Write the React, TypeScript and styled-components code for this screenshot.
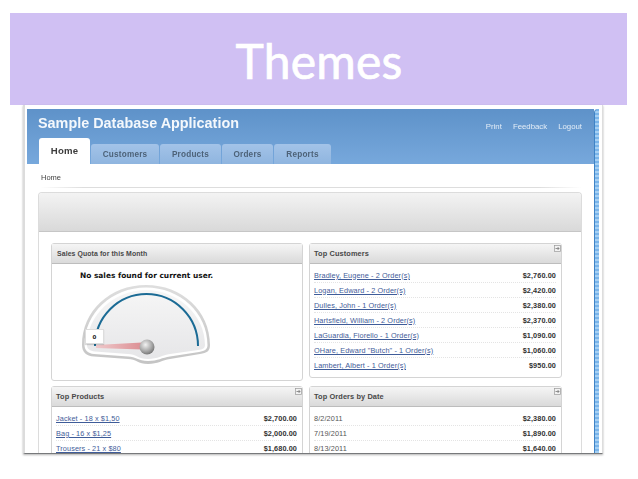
import styled, { createGlobalStyle } from "styled-components";

const GlobalStyle = createGlobalStyle`
  html, body {
    margin: 0;
    padding: 0;
    background: #ffffff;
    overflow: hidden;
  }
  body {
    font-family: "Liberation Sans", Arial, sans-serif;
  }
`;

const Slide = styled.div`
  width: 638px;
  height: 479px;
  padding-top: 13px;
  box-sizing: border-box;
`;

const Banner = styled.div`
  margin-left: 10px;
  width: 617px;
  height: 92px;
  background: #d0c0f3;
  display: flex;
  align-items: center;
  justify-content: center;
`;

const Title = styled.h1`
  margin: 3px 0 0 1px;
  color: #ffffff;
  font-family: Lato, "Open Sans", sans-serif;
  font-weight: 400;
  font-size: 48px;
  line-height: 60px;
  letter-spacing: 0.2px;
  -webkit-text-stroke: 0.7px #ffffff;
`;

const Shot = styled.div`
  margin-left: 23px;
  width: 580px;
  height: 349px;
  box-sizing: border-box;
  padding: 4px 3px 0 2px;
  display: flex;
  overflow: hidden;
  background: #ffffff;
  border-left: 2px solid #dcdcdc;
  border-right: 1px solid #dddddd;
  border-bottom: 1px solid #77797b;
  box-shadow: 0 1px 2px rgba(0, 0, 0, 0.3);
  filter: blur(0.35px);
`;

const AppWindow = styled.div`
  width: 567px;
  flex: none;
`;

const Scrollbar = styled.div`
  width: 5px;
  flex: none;
  border-top-left-radius: 4px;
  background: repeating-linear-gradient(180deg, #79b4ea 0 2px, #a5d0f3 2px 4px);
  border-left: 1px solid #3f83c5;
  box-sizing: border-box;
`;

const Header = styled.div`
  height: 55px;
  box-sizing: border-box;
  padding: 0 12px 0 11px;
  background: linear-gradient(180deg, #5e92c9, #77a8dc);
  display: flex;
  flex-direction: column;
  justify-content: space-between;
`;

const TopRow = styled.div`
  display: flex;
  justify-content: space-between;
  align-items: center;
  padding-top: 5px;
`;

const AppName = styled.div`
  color: #f4f8fc;
  font-weight: 700;
  font-size: 14.4px;
  line-height: 18px;
`;

const TopLinks = styled.div`
  display: flex;
  gap: 11px;
  color: #e3edf7;
  font-size: 7.8px;
  margin-top: 7px;
`;

const Tabs = styled.div`
  display: flex;
  align-items: flex-end;
  gap: 1px;
  padding-left: 1px;
`;

const Tab = styled.div<{ $active?: boolean; $width: number }>`
  width: ${(p) => p.$width}px;
  height: ${(p) => (p.$active ? 26 : 20)}px;
  border-radius: 3px 3px 0 0;
  background: ${(p) => (p.$active ? "#ffffff" : "linear-gradient(180deg, #a3c3e8, #8fb5df)")};
  color: ${(p) => (p.$active ? "#3c3c3c" : "#4d6278")};
  font-weight: 700;
  font-size: ${(p) => (p.$active ? 9.6 : 8.2)}px;
  letter-spacing: 0.2px;
  display: flex;
  align-items: center;
  justify-content: center;
  padding-bottom: ${(p) => (p.$active ? 2 : 0)}px;
  box-sizing: border-box;
`;

const Breadcrumb = styled.div`
  height: 24px;
  box-sizing: border-box;
  margin: 0 13px 0 14px;
  padding-top: 9px;
  font-size: 7.5px;
  line-height: 10px;
  color: #444444;
  border-bottom: 1px solid;
  border-image: linear-gradient(90deg, #ffffff, #dddddd 8%, #dddddd 92%, #ffffff) 1;
`;

const Region = styled.div`
  margin: 4px 12px 0 11px;
  border: 1px solid #dcdcdc;
  border-bottom: 0;
  border-radius: 4px 4px 0 0;
`;

const Hero = styled.div`
  height: 39px;
  border-radius: 3px 3px 0 0;
  background: linear-gradient(180deg, #f3f3f3, #d9d9d9);
  border-bottom: 1px solid #c6c6c6;
  box-sizing: border-box;
`;

const Dashboard = styled.div`
  display: grid;
  grid-template-columns: 252px 253px;
  grid-template-rows: 138px auto;
  column-gap: 6px;
  row-gap: 5px;
  padding: 11px 0 0 12px;
`;

const Panel = styled.div`
  position: relative;
  box-sizing: border-box;
  border: 1px solid #d4d4d4;
  border-radius: 3px;
  background: #ffffff;
  align-self: start;
`;

const PanelHeader = styled.div<{ $small?: boolean }>`
  height: 20px;
  box-sizing: border-box;
  padding-left: ${(p) => (p.$small ? 5 : 4)}px;
  display: flex;
  align-items: center;
  background: linear-gradient(180deg, #f5f5f5, #dadada);
  border-bottom: 1px solid #bdbdbd;
  color: #484848;
  font-weight: 700;
  font-size: ${(p) => (p.$small ? 6.9 : 7.4)}px;
  letter-spacing: 0.1px;
`;

const Expand = styled.svg`
  position: absolute;
  top: 1px;
  right: 0;
  width: 7px;
  height: 7px;
`;

const QuotaBody = styled.div`
  height: 116px;
  padding: 6px 0 0 28px;
  box-sizing: border-box;
`;

const NoSales = styled.div`
  font-family: "DejaVu Sans", Verdana, sans-serif;
  font-weight: 700;
  font-size: 7.45px;
  line-height: 12px;
  color: #111111;
`;

const Gauge = styled.div`
  position: relative;
  width: 140px;
  height: 85px;
  margin: 1px 0 0 -2px;
`;

const GaugeBadge = styled.div`
  position: absolute;
  left: 7px;
  top: 46px;
  width: 19px;
  height: 15px;
  background: #ffffff;
  border: 1px solid #dddddd;
  box-sizing: border-box;
  box-shadow: 0 1px 1px rgba(0, 0, 0, 0.15);
  font-family: "DejaVu Sans", sans-serif;
  font-weight: 700;
  font-size: 5.5px;
  color: #222222;
  display: flex;
  align-items: center;
  justify-content: center;
`;

const List = styled.div`
  padding: 4px 5px 4px 4px;
`;

const Row = styled.div`
  height: 15px;
  box-sizing: border-box;
  display: flex;
  align-items: center;
  justify-content: space-between;
  border-bottom: 1px dotted #e4e4e4;
  font-size: 7.3px;
  letter-spacing: 0.1px;

  &:last-child {
    border-bottom: 0;
  }
`;

const RowLink = styled.span`
  color: #3f5c99;
  text-decoration: underline;
`;

const RowDate = styled.span`
  color: #555555;
`;

const Amount = styled.span`
  color: #333333;
  font-weight: 700;
`;

const customers = [
  ["Bradley, Eugene - 2 Order(s)", "$2,760.00"],
  ["Logan, Edward - 2 Order(s)", "$2,420.00"],
  ["Dulles, John - 1 Order(s)", "$2,380.00"],
  ["Hartsfield, William - 2 Order(s)", "$2,370.00"],
  ["LaGuardia, Fiorello - 1 Order(s)", "$1,090.00"],
  ['OHare, Edward "Butch" - 1 Order(s)', "$1,060.00"],
  ["Lambert, Albert - 1 Order(s)", "$950.00"],
];

const products = [
  ["Jacket - 18 x $1,50", "$2,700.00"],
  ["Bag - 16 x $1,25", "$2,000.00"],
  ["Trousers - 21 x $80", "$1,680.00"],
];

const orders = [
  ["8/2/2011", "$2,380.00"],
  ["7/19/2011", "$1,890.00"],
  ["8/13/2011", "$1,640.00"],
];

function ExpandIcon() {
  return (
    <Expand viewBox="0 0 7 7">
      <rect x="0.5" y="0.5" width="6" height="6" fill="#f2f2f2" stroke="#9a9a9a" strokeWidth="0.7" />
      <path d="M1.5 3.5H5M3.6 2L5 3.5 3.6 5" fill="none" stroke="#666666" strokeWidth="0.7" />
    </Expand>
  );
}

function GaugeDial() {
  return (
    <Gauge>
      <svg width="140" height="85" viewBox="0 0 140 85">
        <defs>
          <linearGradient id="rim" x1="0" y1="0" x2="0" y2="1">
            <stop offset="0" stopColor="#dedede" />
            <stop offset="1" stopColor="#c4c4c4" />
          </linearGradient>
          <linearGradient id="face" x1="0" y1="0" x2="0" y2="1">
            <stop offset="0" stopColor="#f6f6f6" />
            <stop offset="1" stopColor="#e6e6e8" />
          </linearGradient>
          <radialGradient id="knob" cx="0.4" cy="0.35" r="0.7">
            <stop offset="0" stopColor="#f2f2f2" />
            <stop offset="0.6" stopColor="#a8a8a8" />
            <stop offset="1" stopColor="#6f6f6f" />
          </radialGradient>
          <linearGradient id="needle" x1="0" y1="0" x2="1" y2="0">
            <stop offset="0" stopColor="#efc9cb" />
            <stop offset="1" stopColor="#dc8f94" />
          </linearGradient>
        </defs>
        <path
          d="M4 62C4 28 32 2 68 2C104 2 132 28 132 62C132 68 129 70 122 71L92 76C84 77 80 81 70 81C60 81 58 76 50 76L16 73.500C8 73 4 69 4 62Z"
          fill="url(#rim)"
        />
        <path
          d="M6.500 62C6.500 30 34 4.500 68 4.500C102 4.500 129.500 30 129.500 62C129.500 66 127 68 121 69L92 73.500C84 74.500 80 78 70 78C60 78 58 73.500 50 73.500L16 71C10 70.500 6.500 67 6.500 62Z"
          fill="#ffffff"
        />
        <path
          d="M9 62C9 32 36 7 68 7C100 7 127 32 127 62C127 65 125 66.500 120 67L92 71C84 72 80 76 70 76C60 76 58 71 50 71L17 68.500C12 68 9 66 9 62Z"
          fill="url(#face)"
        />
        <path d="M17 63A51.500 52 0 0 1 120 63" fill="none" stroke="#1b6b95" strokeWidth="2" />
        <polygon points="18,62 64,59.500 64,66.500 18,65" fill="url(#needle)" />
        <circle cx="69" cy="64" r="7.500" fill="url(#knob)" />
      </svg>
      <GaugeBadge>0</GaugeBadge>
    </Gauge>
  );
}

export default function App() {
  return (
    <Slide>
      <GlobalStyle />
      <Banner>
        <Title>Themes</Title>
      </Banner>
      <Shot>
        <AppWindow>
          <Header>
            <TopRow>
              <AppName>Sample Database Application</AppName>
              <TopLinks>
                <span>Print</span>
                <span>Feedback</span>
                <span>Logout</span>
              </TopLinks>
            </TopRow>
            <Tabs>
              <Tab $active $width={51}>Home</Tab>
              <Tab $width={68}>Customers</Tab>
              <Tab $width={61}>Products</Tab>
              <Tab $width={51}>Orders</Tab>
              <Tab $width={57}>Reports</Tab>
            </Tabs>
          </Header>
          <Breadcrumb>Home</Breadcrumb>
          <Region>
            <Hero />
            <Dashboard>
              <Panel>
                <PanelHeader $small>Sales Quota for this Month</PanelHeader>
                <QuotaBody>
                  <NoSales>No sales found for current user.</NoSales>
                  <GaugeDial />
                </QuotaBody>
              </Panel>
              <Panel>
                <PanelHeader>Top Customers</PanelHeader>
                <ExpandIcon />
                <List>
                  {customers.map(([name, amount]) => (
                    <Row key={name}>
                      <RowLink>{name}</RowLink>
                      <Amount>{amount}</Amount>
                    </Row>
                  ))}
                </List>
              </Panel>
              <Panel>
                <PanelHeader>Top Products</PanelHeader>
                <ExpandIcon />
                <List>
                  {products.map(([name, amount]) => (
                    <Row key={name}>
                      <RowLink>{name}</RowLink>
                      <Amount>{amount}</Amount>
                    </Row>
                  ))}
                </List>
              </Panel>
              <Panel>
                <PanelHeader>Top Orders by Date</PanelHeader>
                <ExpandIcon />
                <List>
                  {orders.map(([date, amount]) => (
                    <Row key={date}>
                      <RowDate>{date}</RowDate>
                      <Amount>{amount}</Amount>
                    </Row>
                  ))}
                </List>
              </Panel>
            </Dashboard>
          </Region>
        </AppWindow>
        <Scrollbar />
      </Shot>
    </Slide>
  );
}
